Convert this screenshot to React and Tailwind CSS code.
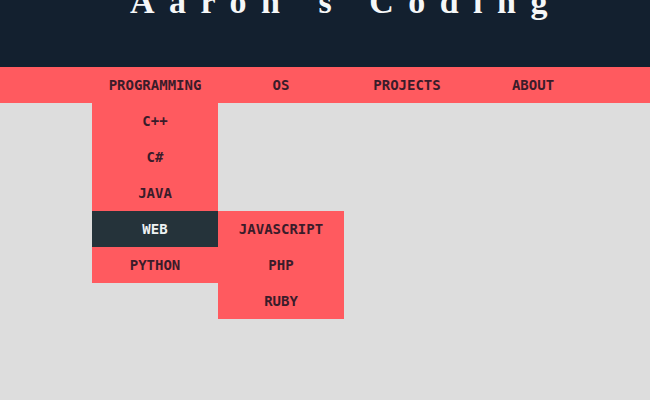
import React from "react"

const programming = ["C++", "C#", "JAVA", "WEB", "PYTHON"]
const web = ["JAVASCRIPT", "PHP", "RUBY"]
const navItems = ["PROGRAMMING", "OS", "PROJECTS", "ABOUT"]

function Item({ label, active, children }) {
  return (
    <li className={`relative h-9 w-[126px] flex items-center justify-center ${active ? "bg-[#25333a] text-[#eef2f3]" : "bg-[#ff5a5f] text-[#3a1c2a]"}`}>
      {label}
      {children}
    </li>
  )
}

export default function App() {
  return (
    <div className="min-h-[400px] bg-[#dddddd] overflow-hidden">
      {/* Header */}
      <header className="h-[67px] bg-[#13202f] overflow-hidden">
        <h1
          className="text-center pl-[42px] -mt-[15px] text-[34px] leading-none font-bold text-[#f5f7f8] tracking-[14.5px]"
          style={{ fontFamily: '"Liberation Serif", serif' }}
        >
          Aaron's Coding
        </h1>
      </header>

      {/* Nav */}
      <nav
        className="h-9 bg-[#ff5a5f] text-[14px] font-bold"
        style={{ fontFamily: '"DejaVu Sans Mono", monospace' }}
      >
        <ul className="flex h-full pl-[92px]">
          {navItems.map((n, i) => (
            <li key={n} className="relative h-9 w-[126px] flex items-center justify-center text-[#3a1c2a]">
              {n}
              {i === 0 && (
                <ul className="absolute left-0 top-full">
                  {programming.map((p) => (
                    <Item key={p} label={p} active={p === "WEB"}>
                      {p === "WEB" && (
                        <ul className="absolute left-full top-0">
                          {web.map((w) => (
                            <Item key={w} label={w} />
                          ))}
                        </ul>
                      )}
                    </Item>
                  ))}
                </ul>
              )}
            </li>
          ))}
        </ul>
      </nav>
    </div>
  )
}
